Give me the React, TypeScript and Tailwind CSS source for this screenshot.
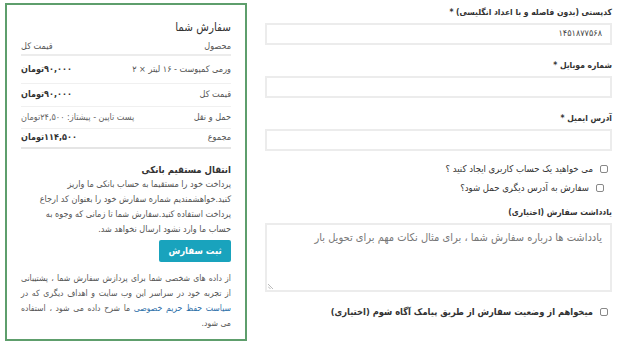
import React from "react";

const rows = [
  { label: "ورمی کمپوست - ۱۶ لیتر  × ۲", value: "۹۰,۰۰۰تومان", bold: true, h: "h-[28px]" },
  { label: "قیمت کل", value: "۹۰,۰۰۰تومان", bold: true, h: "h-[23px]" },
  { label: "حمل و نقل", value: "پست تاپین - پیشتاز: ۲۴,۵۰۰تومان", bold: false, h: "h-[22px]" },
  { label: "مجموع", value: "۱۱۴,۵۰۰تومان", bold: true, h: "h-[20px]" },
];

const Label: React.FC<{ children: React.ReactNode; className?: string }> = ({ children, className }) => (
  <label className={`block h-[12px] text-[8.5px] font-bold text-[#333] leading-[12px] ${className || ""}`}>
    {children}
  </label>
);

const Field: React.FC<{ label: string; value?: string; first?: boolean }> = ({ label, value, first }) => (
  <div className={first ? "" : "mt-[14px]"}>
    <Label className="mb-[5px]">{label}</Label>
    <div className="h-[22px] border-2 border-[#ececec] bg-white px-[8px] flex items-center text-[9px] text-[#444]">
      {value}
    </div>
  </div>
);

const Check: React.FC<{ label: string; bold?: boolean; className?: string }> = ({ label, bold, className }) => (
  <label
    className={`flex items-center h-[12px] gap-[7px] leading-[12px] text-[#333] ${
      bold ? "font-bold text-[9.3px]" : "text-[9.5px]"
    } ${className || ""}`}
  >
    <span className="w-[8px] h-[8px] border border-[#888] rounded-[2px] bg-white shrink-0" />
    {label}
  </label>
);

export default function App() {
  return (
    <div
      dir="rtl"
      className="w-[624px] h-[363px] bg-white flex gap-[18px] pr-[12px] pl-[5px] pt-[3px] overflow-hidden"
      style={{ fontFamily: "Tahoma, 'DejaVu Sans Condensed', 'DejaVu Sans', sans-serif" }}
    >
      {/* form */}
      <div className="w-[347px] pt-[3px]">
        <Field label="کدپستی (بدون فاصله و با اعداد انگلیسی) *" value="۱۴۵۱۸۷۷۵۶۸" first />
        <Field label="شماره موبایل *" />
        <Field label="آدرس ایمیل *" />
        <Check label="می خواهید یک حساب کاربری ایجاد کنید ؟" className="mt-[12px] pr-[4px]" />
        <Check label="سفارش به آدرس دیگری حمل شود؟" className="mt-[7px] pr-[8px]" />
        <Label className="mt-[12px] mb-[5px]">یادداشت سفارش (اختیاری)</Label>
        <div className="relative h-[69px] border-2 border-[#ececec] bg-white px-[8px] pt-[6px] text-[11px] leading-[14px] text-[#777]">
          یادداشت ها درباره سفارش شما ، برای مثال نکات مهم برای تحویل بار
          <svg className="absolute left-[1px] bottom-[1px]" width="6" height="6" viewBox="0 0 6 6">
            <path d="M0 1 L5 6 M0 3.5 L2.5 6" stroke="#aaa" strokeWidth="0.8" />
          </svg>
        </div>
        <Check
          label="میخواهم از وضعیت سفارش از طریق پیامک آگاه شوم (اختیاری)"
          bold
          className="mt-[14px] pr-[4px]"
        />
      </div>

      {/* order summary */}
      <div className="w-[242px] h-[338px] border-2 border-[#5e9e6c] px-[14px] pt-[14px]">
        <h3 className="text-[11.5px] text-[#333] leading-[16px]">سفارش شما</h3>
        <div className="flex justify-between items-center h-[12px] mt-[5px] text-[9px] leading-[12px] text-[#555] box-content pb-[2px] border-b-2 border-[#ececec]">
          <span>محصول</span>
          <span>قیمت کل</span>
        </div>
        {rows.map((r, i) => (
          <div
            key={i}
            className={`flex justify-between items-center ${r.h} text-[9px] text-[#555] ${
              i === rows.length - 1 ? "border-b-2 border-[#e5e5e5]" : "border-b border-[#f0f0f0]"
            }`}
          >
            <span>{r.label}</span>
            <span className={r.bold ? "font-bold text-[#333]" : "text-[#666]"}>{r.value}</span>
          </div>
        ))}
        <h4 className="h-[12px] leading-[12px] text-[9.5px] font-bold text-[#333] mt-[15px]">انتقال مستقیم بانکی</h4>
        <p className="mt-[1px] text-[9px] leading-[15px] text-[#555]">
          پرداخت خود را مستقیما به حساب بانکی ما واریز کنید.خواهشمندیم شماره سفارش خود را بعنوان کد ارجاع
          پرداخت استفاده کنید.سفارش شما تا زمانی که وجوه به حساب ما وارد نشود ارسال نخواهد شد.
        </p>
        <button className="mt-[3px] h-[22px] w-[72px] bg-[#19a3bd] text-white text-[9.5px] font-bold rounded-[2px]">
          ثبت سفارش
        </button>
        <p className="mt-[9px] text-[8.6px] leading-[15px] text-[#555] text-justify">
          از داده های شخصی شما برای پردازش سفارش شما ، پشتیبانی از تجربه خود در سراسر این وب سایت و اهداف دیگری که در{" "}
          <a className="text-[#2b6ea8]">سیاست حفظ حریم خصوصی</a> ما شرح داده می شود ، استفاده می شود.
        </p>
      </div>
    </div>
  );
}
